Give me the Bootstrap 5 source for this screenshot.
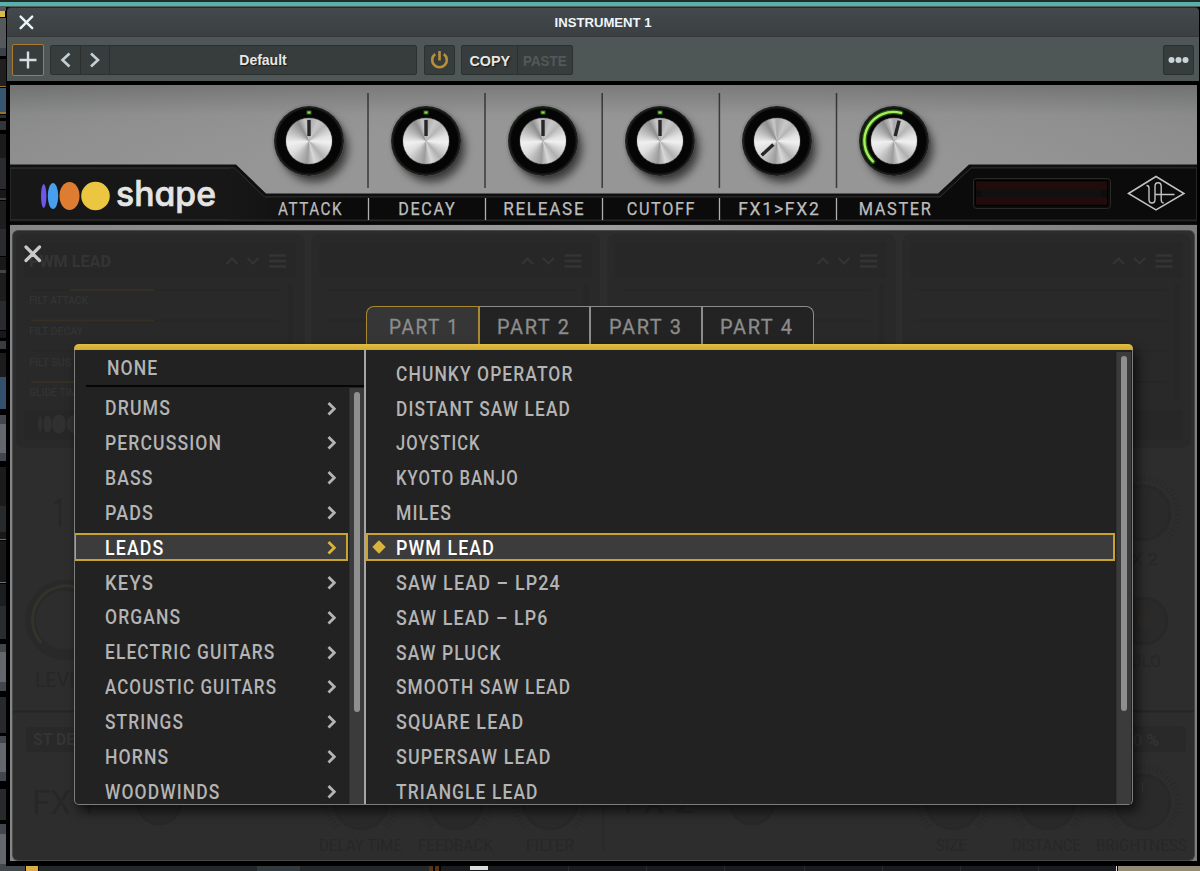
<!DOCTYPE html>
<html lang="en">
<head>
<meta charset="utf-8">
<meta name="viewport" content="width=device-width, initial-scale=1">
<title>Instrument 1</title>
<link href="https://cdn.jsdelivr.net/npm/bootstrap@5.3.0/dist/css/bootstrap.min.css" rel="stylesheet">
<style>
  html, body { height: 871px; }
  body { width: 1200px; margin: 0; overflow: hidden; background: #000; position: relative; padding-top: 7px; font-family: "Liberation Sans", Arial, sans-serif; }
  .synth-text { font-family: Roboto, "Liberation Sans", sans-serif; font-weight: 500; }
  .host-bg { position: absolute; inset: 0; }
  .plug-window { position: relative; margin-left: 6px; width: 1194px; height: 859px; background: #000; border-radius: 5px 5px 0 0; }
  .title-bar { height: 30px; margin: 0 1px; background: linear-gradient(#43494c, #3b3f41); border-top: 1px solid #25292b; border-bottom: 1px solid #343839; border-radius: 4px 4px 0 0; color: #eef6fb; font-weight: 700; font-size: 13px; position: relative; }
  .title-bar .shut { position: absolute; left: 11px; top: 6px; }
  .tool-bar { height: 44px; margin: 0 1px; padding: 1px 5px 0; background: #4e5756; font-size: 14px; font-weight: 700; }
  .tool-box { height: 30px; background: #373d3c; border: 1px solid #2c3130; border-radius: 2px; color: #e6e6e6; text-shadow: 1px 1px 1px #1a1a1a; }
  .tool-box > * + * { border-left: 1px solid #2b302f; }
  .tool-box > *{ height: 100%; display: flex; align-items: center; justify-content: center; }
  .tool-box span { position: relative; top: 1px; }
  .add-box { width: 32px; height: 32px; border-color: #ae7b2e; }
  .paste { color: #525958; text-shadow: none; }
  .face { margin: 4px 3px 0 4px; height: 140px; position: relative; background: radial-gradient(ellipse at 50% 60%, #969696 40%, #8f8f8f 70%, #838484 100%); }
  .face::after { content: ""; position: absolute; inset: 0 0 auto 0; height: 30px; background: linear-gradient(#00000024, #0000); }
  .face > svg { position: absolute; left: 0; top: 0; }
  .knob-row { position: absolute; left: 241px; top: 0; }
  .knob-cell { width: 117.1px; height: 140px; position: relative; }
  .knob-name { font-size: 18px; font-weight: 400; color: #bdbdbd; line-height: 20px; padding: 23px 0 0 2px; -webkit-text-stroke: .25px #bdbdbd; }
  .dial { width: 70px; height: 70px; border-radius: 50%; margin: 21px 0 0 22.6px; background: radial-gradient(circle, #050505 64%, #1c211b 68%, #141512 90%, #050505 100%); box-shadow: 5px 7px 9px -1px #0009, 0 0 0 2px #7b7b7b66; display: flex; align-items: center; justify-content: center; position: relative; }
  .dial-cap { width: 46px; height: 46px; border-radius: 50%; background: conic-gradient(#a8a8a8, #c8c8c8 25deg, #b5b5b5 45deg, #e2e2e2 75deg, #f0f0f0 95deg, #d5d5d5 115deg, #b0b0b0 140deg, #d8d8d8 165deg, #9c9c9c 185deg, #b5b5b5 205deg, #ddd 235deg, #f0f0f0 265deg, #bbb 300deg, #8f8f8f 330deg, #c9c9c9 350deg, #a8a8a8); box-shadow: 0 0 1px #fff; }
  .dial svg { position: absolute; inset: 0; }
  .stage { margin: 0 3px 0 4px; height: 636px; position: relative; padding: 81px 0 0 64px; background: linear-gradient(90deg, #868686, #9e9e9e 50%, #7c7e7e); }
  .dim { position: absolute; left: 3px; top: 6px; width: 1181px; height: 629px; border-radius: 5px; background: #2d2d2d; overflow: hidden; box-shadow: 0 0 0 1px #484848; }
  .dim svg { position: absolute; inset: 0; }
  .part-tabs { margin-left: 291.5px; position: relative; height: 38px; }
  .part-tab { width: 111.6px; height: 38px; background: #232323; border: 2px solid #8c8c8c; border-width: 1.5px 2px 0 0; padding: 3px 0 0 17.5px; color: #8c8c8c; font-size: 20.5px; letter-spacing: 1.8px; display: flex; align-items: center; font-weight: 400; -webkit-text-stroke: .3px #8c8c8c; }
  .part-tab.on { width: 114px; background: #363636; border: 1.5px solid #a98a30; border-right-width: 2px; border-bottom: 0; border-top-left-radius: 8px; padding-left: 22px; }
  .part-tab:last-child { border-top-right-radius: 8px; border-right-width: 1.5px; }
  .browser { width: 1058.5px; height: 461px; background: #222; border: 1px solid #7d7d7d; border-top: 0; border-radius: 5px; position: relative; box-shadow: 4px 6px 12px #000a; }
  .bar-top { height: 6px; margin: 0 -1px; background: linear-gradient(#e0bd45, #cfa92f); border-radius: 5px 5px 0 0; flex: none; }
  .cats { width: 291px; border-right: 2px solid #a6a6a6; }
  .none-row { height: 37px; margin-left: 11px; padding: 2px 0 0 20.5px; border-bottom: 2px solid #060606; }
  .pick { height: 34.87px; display: flex; align-items: center; color: #b4b4b4; font-size: 20.5px; letter-spacing: 1.3px; }
  .pick > div { height: 28px; width: 100%; display: flex; align-items: center; position: relative; border: 2px solid transparent; }
  .pick.on > div { border-color: #cba22f; background: #3c3c3c; color: #fff; }
  .pick.on svg { color: #dbb43c; }
  .pick .fit { position: relative; top: 1px; }
  .cats .pick > div { padding: 0 9px 0 29px; justify-content: space-between; width: 274px; margin-left: -1px; }
  .sounds .pick > div { padding-left: 27.5px; }
  .pick .gem { position: absolute; left: 4px; top: 5px; }
  .none-row .fit { color: #b4b4b4; font-size: 20.5px; letter-spacing: 1.3px; }
  .fit { display: inline-block; white-space: nowrap; transform-origin: 0 50%; line-height: 1; }
  .track { width: 15px; background: #3b3b3b; border-left: 1px solid #303030; padding: 4px 0 0 4px; }
  .thumb { width: 6px; border-radius: 3px; background: #8f8f8f; }
  .close-x { position: absolute; left: 13px; top: 19px; }
</style>
</head>
<body>
<svg class="host-bg" id="host" width="1200" height="871" shape-rendering="crispEdges"></svg>
<main class="plug-window">
  <header class="title-bar d-flex align-items-center justify-content-center">
    <svg class="shut" width="17" height="17" viewBox="0 0 17 17" fill="none" stroke="#eaf4fa" stroke-width="2.4" stroke-linecap="round"><path d="M2.6 2.6l11.600 11.600M14.200 2.600L2.600 14.200"/></svg>
    <span class="fit" data-w="95">INSTRUMENT 1</span>
  </header>
  <div class="tool-bar d-flex align-items-center">
    <div class="tool-box add-box"><div><svg width="20" height="20" stroke="#d5dfe2" stroke-width="2.400"><path d="M10 1.500v17M1.500 10h17"/></svg></div></div>
    <div class="tool-box d-flex" style="width:367px;margin-left:6px">
      <div style="width:29px"><svg width="12" height="16" fill="none" stroke="#c3d0d5" stroke-width="2.600"><path d="M9.500 1.500L2.500 8l7 6.500"/></svg></div>
      <div style="width:29px"><svg width="12" height="16" fill="none" stroke="#c3d0d5" stroke-width="2.600"><path d="M2 1.500L9 8l-7 6.500"/></svg></div>
      <div class="flex-fill"><span>Default</span></div>
    </div>
    <div class="tool-box" style="width:31px;margin-left:7px"><div><svg width="20" height="20" fill="none" stroke="#b98f38" stroke-width="2.600"><path d="M5.200 4.100a7.300 7.300 0 1 0 8.600 0M9.500 1v9.500"/></svg></div></div>
    <div class="tool-box d-flex" style="width:112px;margin-left:6px"><div style="width:55px"><span class="fit" data-w="39">COPY</span></div><div class="flex-fill paste"><span class="fit" data-w="42">PASTE</span></div></div>
    <div class="tool-box ms-auto" style="width:31px"><div><svg width="22" height="8" fill="#c8d4d8"><circle cx="3.500" cy="4" r="3"/><circle cx="10.500" cy="4" r="3"/><circle cx="17.500" cy="4" r="3"/></svg></div></div>
  </div>

  <section class="face">
    <svg width="1187" height="140" viewBox="10 85 1187 140">
      <path d="M10 164.500H236L266 193.500H938L969 164.500H1197V225H10z" fill="#101010"/>
      <path d="M10 168H234.500L264.500 197H940L971 168H1197V220H10z" fill="#171717" stroke="#383838" stroke-width="1"/>
      <path d="M230 168.500H234.500L264.500 197.500H940L971 168.500H1196V219.500H230z" fill="url(#plate)"/>
      <defs><linearGradient id="plate"><stop offset="0" stop-color="#171717"/><stop offset=".12" stop-color="#0b0b0b"/></linearGradient></defs>
      <rect x="10" y="222" width="1187" height="2" fill="#070707"/>
      <path d="M368 93v95M485 93v95M602.200 93v95M719.400 93v95M836.500 93v95" stroke="#3a3a3a" stroke-width="1.500"/>
      <path d="M368.500 198v22M485.500 198v22M602.500 198v22M719.500 198v22M836.500 198v22" stroke="#b0b0b0" stroke-width="1.300"/>
      <ellipse cx="43.700" cy="196" rx="2.700" ry="12" fill="#6d56ea"/><ellipse cx="53" cy="196" rx="5.200" ry="13" fill="#489ff0"/><ellipse cx="69.500" cy="196" rx="10" ry="14" fill="#de7d31"/><circle cx="95.500" cy="196" r="14.300" fill="#ecc640"/>
      <text x="116" y="206" font-family="Inter, Lato, sans-serif" font-size="35" font-weight="500" fill="#e4e4e4" stroke="#e4e4e4" stroke-width=".7" textLength="100" lengthAdjust="spacingAndGlyphs" style="font-feature-settings:'cv11','ss02'">shape</text>
      <rect x="973.500" y="178.500" width="137" height="30" rx="3" fill="#0b0b0b" stroke="#292929"/>
      <rect x="975.500" y="180.500" width="132" height="25" fill="#0d0d0d" stroke="#000"/>
      <rect x="976" y="182" width="131" height="8" fill="#220c0b"/><rect x="976" y="197" width="131" height="7.500" fill="#220c0b"/><rect x="982" y="190" width="119" height="7" fill="#121111"/>
      <g fill="none" stroke="#c2c2c2" stroke-width="1.400"><path d="M1128.500 193.500L1156 176.500l28 17-28 16.500z" stroke-width="1.500"/><path d="M1146.500 185.500q2.500 0 2.500 2.500v11.500q0 3.500 3 3.500t3-3.500V186.500q0-3.700 3.100-3.700t3.100 3.700v13q0 3.300 2.500 3.500M1154.500 194.500H1174.500"/></g>
    </svg>
    <div class="knob-row d-flex" id="knobs"></div>
  </section>

  <section class="stage">
    <div class="dim"><svg width="1181" height="629" viewBox="13 231 1181 629" id="dimArt"></svg></div>
    <svg class="close-x" width="20" height="20" stroke="#c8c8c8" stroke-width="3.200" stroke-linecap="round"><path d="M3 3l13.500 13.500M16.500 3L3 16.500"/></svg>
    <nav class="part-tabs d-flex synth-text">
      <div class="part-tab on"><span class="fit" data-w="67">PART 1</span></div>
      <div class="part-tab"><span class="fit" data-w="70">PART 2</span></div>
      <div class="part-tab"><span class="fit" data-w="70">PART 3</span></div>
      <div class="part-tab"><span class="fit" data-w="70">PART 4</span></div>
    </nav>
    <div class="browser d-flex flex-column synth-text">
      <div class="bar-top"></div>
      <div class="d-flex flex-fill overflow-hidden">
        <div class="cats d-flex flex-column">
          <div class="none-row d-flex align-items-center"><span class="fit" data-w="48.5">NONE</span></div>
          <div class="d-flex flex-fill overflow-hidden">
            <div class="flex-fill" id="cats" style="padding-top:3.500px"></div>
            <div class="track" style="margin-top:1.500px"><div class="thumb" style="height:320px"></div></div>
          </div>
        </div>
        <div class="sounds flex-fill" id="sounds" style="padding-top:5.500px"></div>
        <div class="track" style="margin:1.500px 1px 0"><div class="thumb" style="height:355px"></div></div>
      </div>
    </div>
  </section>
</main>

<script>
const cats = [["DRUMS",63.5],["PERCUSSION",114.5],["BASS",46],["PADS",46],["LEADS",57],["KEYS",46.5],["ORGANS",73],["ELECTRIC GUITARS",167.5],["ACOUSTIC GUITARS",169.5],["STRINGS",76.500],["HORNS",61.500],["WOODWINDS",113]];
const sounds = [["CHUNKY OPERATOR",174.500],["DISTANT SAW LEAD",172],["JOYSTICK",82],["KYOTO BANJO",120],["MILES",53],["PWM LEAD",96],["SAW LEAD – LP24",162.500],["SAW LEAD – LP6",150],["SAW PLUCK",103],["SMOOTH SAW LEAD",172.500],["SQUARE LEAD",125.500],["SUPERSAW LEAD",153],["TRIANGLE LEAD",140]];
const chev = '<svg width="10" height="16" fill="none" stroke="currentColor" stroke-width="2.8"><path d="M1.500 3L7.300 8.800l-5.800 5.800"/></svg>';
const gem = '<svg class="gem" width="14" height="14"><path d="M7 .3L13.700 7 7 13.700.3 7z" fill="currentColor"/></svg>';
document.getElementById('cats').innerHTML = cats.map(([t,w]) => `<div class="pick${t==='LEADS'?' on':''}"><div><span class="fit" data-w="${w}">${t}</span>${chev}</div></div>`).join('');
document.getElementById('sounds').innerHTML = sounds.map(([t,w]) => `<div class="pick${t==='PWM LEAD'?' on':''}"><div>${t==='PWM LEAD'?gem:''}<span class="fit" data-w="${w}">${t}</span></div></div>`).join('');

/* header knobs: name, label width, pointer angle */
const knobs = [["ATTACK",62,0],["DECAY",55,0],["RELEASE",79,0],["CUTOFF",66,0],["FX1&gt;FX2",79,-133],["MASTER",70,14]];
document.getElementById('knobs').innerHTML = knobs.map(([t,w,a]) => {
  const light = t==='MASTER'
    ? '<path d="M14 55.500A29 29 0 0 1 42 6.900" fill="none" stroke="#3f8a1c" stroke-width="5" stroke-linecap="round" opacity=".6"/><path d="M14 55.500A29 29 0 0 1 42 6.900" fill="none" stroke="#a6f25a" stroke-width="2.400" stroke-linecap="round"/>'
    : a===0 ? '<rect x="32.500" y="4.500" width="5" height="4" fill="#2d6b18"/><rect x="33.500" y="5.500" width="3" height="2" fill="#8fe04f"/>' : '';
  return `<div class="knob-cell"><div class="dial"><div class="dial-cap"></div><svg width="70" height="70">${light}<path d="M35 14v16" stroke="#262626" stroke-width="3.400" transform="rotate(${a} 35 35)"/></svg></div><div class="knob-name text-center synth-text"><span class="fit mid" data-w="${w}" style="letter-spacing:1.800px">${t}</span></div></div>`;
}).join('');

document.querySelectorAll('.fit').forEach(el => {
  const ls = parseFloat(getComputedStyle(el).letterSpacing) || 0;
  const k = +el.dataset.w / (el.offsetWidth - ls - 2);
  if (el.classList.contains('mid') || !el.closest('.synth-text')) el.style.transformOrigin = '50% 50%';
  el.style.transform = `scaleX(${k})`;
});

/* inactive editor behind the browser */
let s = '<g font-family="Roboto, sans-serif">';
[16,311.500,607,902.500].forEach((x,i) => {
  s += `<rect x="${x}" y="234" width="288.500" height="213.500" rx="8" fill="#292929"/><rect x="${x+8}" y="242" width="272" height="36" rx="3" fill="#272727"/><rect x="${x+8}" y="410" width="272" height="30" rx="3" fill="#272727"/><rect x="${x+272}" y="285" width="5" height="116" fill="#272727"/>`;
  s += `<path d="M${x+210.500} 264l5.500-5.500 5.500 5.500M${x+231.500} 258l5.500 5.500 5.500-5.500" fill="none" stroke="#343434" stroke-width="2.200"/><path d="M${x+253} 255.500h17M${x+253} 261h17M${x+253} 266.500h17" stroke="#343434" stroke-width="2.400"/>`;
  [290,320.500,351,382].forEach(y => s += `<path d="M${x+13} ${y}h250" stroke="#272727" stroke-width="1.500"/>`);
});
s += '<text x="29" y="266.500" font-size="17" font-weight="700" fill="#343434" textLength="82" lengthAdjust="spacingAndGlyphs">PWM LEAD</text>';
[["FILT ATTACK",304,59],["FILT DECAY",334.500,54],["FILT SUSTAIN",365.500,66],["GLIDE TIME",396,54]].forEach(([t,y,w]) => s += `<text x="29" y="${y}" font-size="11.500" font-weight="500" fill="#333" textLength="${w}" lengthAdjust="spacingAndGlyphs">${t}</text>`);
s += '<path d="M70 290h84M31 320.500h123M31 382h123" stroke="#363024" stroke-width="2.200"/><g fill="#303030"><ellipse cx="40" cy="424" rx="2" ry="8"/><ellipse cx="47.500" cy="424" rx="4" ry="9"/><ellipse cx="59" cy="424" rx="7" ry="9.500"/><circle cx="76" cy="424" r="9.500"/></g>';
s += '<path d="M13 711.500h1181" stroke="#252525" stroke-width="2"/><path d="M603.500 714v138" stroke="#292929" stroke-width="1.500"/><rect x="26" y="727" width="120" height="25" rx="4" fill="#292929"/><rect x="1060" y="726" width="126" height="26" rx="4" fill="#292929"/>';
s += '<circle cx="65" cy="620" r="40" fill="#292929"/><circle cx="65" cy="620" r="29.500" fill="#2d2d2d"/><path d="M41.500 643A34 34 0 0 1 75 587" fill="none" stroke="#33332a" stroke-width="3"/>';
[[1143,513,27],[1144,621,23],[159,802,22],[361,802,27],[456,802,27],[550,802,27],[752,802,22],[953,802,27],[1048,802,27],[1143,802,27]].forEach(([x,y,r]) => {
  s += `<circle cx="${x}" cy="${y}" r="${r}" fill="#2a2a2a" stroke="#282828" stroke-width="2.500"/>`;
  if (r===27) s += `<path d="M${x-24.700} ${y+24.700}A35 35 0 1 1 ${x+24.700} ${y+24.700}" fill="none" stroke="#2a2a2a" stroke-width="6" stroke-dasharray="1.200 3"/>`;
});
s += '<circle cx="1144" cy="621" r="9" fill="#2c2b29"/><path d="M1142.500 782v11" stroke="#333" stroke-width="1.500"/>';
[["1",52,527,40,14],["LEVEL",35,687,20,56],["FX 1",32,814,34,66],["DELAY TIME",319,851,16,83],["FEEDBACK",418,851,16,75],["FILTER",526,851,16,48],["FX 2",623,813,30,71],["SIZE",936,851,16,31],["DISTANCE",1012,851,16,69],["BRIGHTNESS",1096,851,16,91],["FX 2",1121,565,17,37],["SOLO",1121,667,17,40]].forEach(([t,x,y,f,w]) => s += `<text x="${x}" y="${y}" font-size="${f}" fill="#272727" textLength="${w}" lengthAdjust="spacingAndGlyphs">${t}</text>`);
s += '<g font-size="17" font-weight="700" fill="#343434"><text x="33" y="745" textLength="70" lengthAdjust="spacingAndGlyphs">ST DELAY</text><text x="1123" y="746" font-weight="500" textLength="36" lengthAdjust="spacingAndGlyphs">50 %</text></g></g>';
document.getElementById('dimArt').innerHTML = s;

/* strips of the host application: x, y, w, h, colour */
const r = [[0,0,1200,2,"#26292a"],[0,2,1200,4,"#55b1aa"],[0,6,1200,1,"#555f60"],[0,6,6,5,"#555759"],[0,11,5,6,"#deb949"],[0,18,6,30,"#56595c"],[0,48,6,8,"#3c4247"],[0,59,6,27,"#202020"],[0,86,6,1,"#9a7225"],[0,88,6,24,"#37566f"],[0,112,6,2,"#9a7225"],[0,115,6,3,"#292b2c"],[0,121,6,9,"#333638"],[0,134,6,24,"#1b1b1b"],[0,158,6,31,"#292b2e"],[0,190,6,8,"#181818"],[0,198,6,2,"#444"],[0,201,6,28,"#1d1d1d"],[0,229,6,27,"#292b2e"],[0,257,6,13,"#191919"],[0,270,6,3,"#444"],[0,273,6,28,"#1d1d1d"],[0,301,6,29,"#292b2e"],[0,331,6,7,"#191919"],[0,341,6,8,"#3a3d3f"],[0,353,6,24,"#1c1c1c"],[0,377,6,32,"#33506c"],[0,415,6,9,"#41474c"],[0,424,6,29,"#64686c"],[0,453,6,8,"#41474c"],[0,467,6,39,"#1b1b1b"],[0,506,6,26,"#272a2d"],[0,532,6,7,"#191919"],[0,539,6,1,"#707070"],[0,541,6,41,"#181818"],[0,582,6,1,"#707070"],[0,584,6,22,"#1b1e20"],[0,606,6,33,"#292c2f"],[0,644,6,8,"#41474c"],[0,652,6,30,"#64686c"],[0,682,6,9,"#41474c"],[0,697,6,36,"#27292c"],[0,736,6,7,"#41474c"],[0,743,6,29,"#64686c"],[0,772,6,9,"#41474c"],[0,789,6,31,"#27292c"],[0,824,6,48,"#41474c"],[0,834,6,30,"#64686c"],
[0,866,25,5,"#41474c"],[26,866,12,5,"#dbaf43"],[39,866,390,5,"#23282b"],[257,866,43,5,"#303a3f"],[429,866,4,5,"#5a3410"],[435,866,4,5,"#5a3410"],[441,866,675,5,"#1b1c1f"],[470,866,18,4,"#dcdcdc"],[1116,866,1,5,"#ddd"],[1118,866,82,5,"#968c76"]];
[568,646,724,804,882,960,1038].forEach(x => r.push([x,866,1,5,"#2b2c2f"]));
document.getElementById('host').innerHTML = r.map(([x,y,w,h,c]) => `<rect x="${x}" y="${y}" width="${w}" height="${h}" fill="${c}"/>`).join('');
</script>
<script src="https://cdn.jsdelivr.net/npm/bootstrap@5.3.0/dist/js/bootstrap.bundle.min.js"></script>
</body>
</html>
